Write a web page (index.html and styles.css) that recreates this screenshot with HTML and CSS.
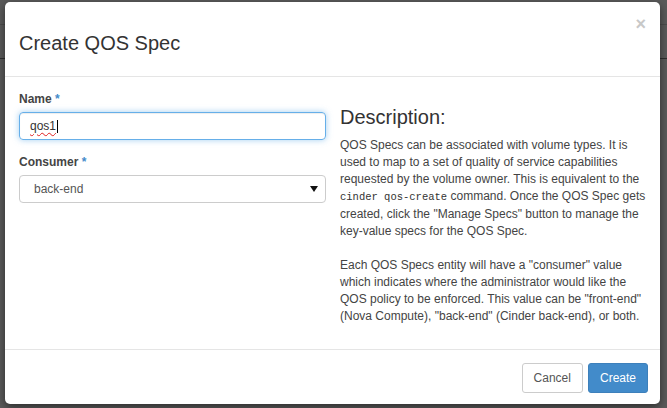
FILE: index.html
```html
<!DOCTYPE html>
<html lang="en">
<head>
<meta charset="utf-8">
<title>Create QOS Spec</title>
<link rel="stylesheet" href="styles.css">
</head>
<body>
<div class="backdrop">
  <div class="modal">
    <div class="modal-header">
      <h3 class="modal-title">Create QOS Spec</h3>
      <span class="close">&times;</span>
    </div>
    <div class="modal-body">
      <div class="form-col">
        <div class="form-group">
          <label class="label">Name <span class="req">*</span></label>
          <div class="control focused"><span class="misspelled">qos1</span><span class="caret"></span></div>
        </div>
        <div class="form-group">
          <label class="label">Consumer <span class="req">*</span></label>
          <div class="control select"><span>back-end</span>
            <svg class="arrow" width="8" height="6" viewBox="0 0 8 6"><path d="M0 0H8L4 6Z" fill="#111"/></svg>
          </div>
        </div>
      </div>
      <div class="help-col">
        <h3 class="help-title">Description:</h3>
        <p>QOS Specs can be associated with volume types. It is used to map to a set of quality of service capabilities requested by the volume owner. This is equivalent to the <code>cinder qos-create</code> command. Once the QOS Spec gets created, click the "Manage Specs" button to manage the key-value specs for the QOS Spec.</p>
        <p>Each QOS Specs entity will have a "consumer" value which indicates where the administrator would like the QOS policy to be enforced. This value can be "front-end" (Nova Compute), "back-end" (Cinder back-end), or both.</p>
      </div>
    </div>
    <div class="modal-footer">
      <button class="btn btn-default">Cancel</button>
      <button class="btn btn-primary">Create</button>
    </div>
  </div>
</div>
</body>
</html>
```
FILE: styles.css
```css
* { box-sizing: border-box; }
html, body { margin: 0; padding: 0; }
body {
  width: 667px;
  height: 408px;
  overflow: hidden;
  font-family: "Liberation Sans", Arial, sans-serif;
  font-size: 12px;
  line-height: 1.428571;
  color: #333;
  background:
    linear-gradient(to bottom, transparent 24px, #4c4c4c 24px, #4c4c4c 25px, transparent 25px),
    linear-gradient(to bottom, transparent 58px, #2e2e2e 58px, #2e2e2e 59px, transparent 59px),
    #5a5a5a;
}
.backdrop {
  padding: 2px 7px 0 5px;
}
.modal {
  width: 655px;
  height: 402px;
  background: #fff;
  border-radius: 5px;
  box-shadow: 0 3px 9px rgba(0,0,0,.5);
  display: flex;
  flex-direction: column;
}
.modal-header {
  display: flex;
  justify-content: space-between;
  align-items: flex-start;
  padding: 0 14px 0 14px;
  height: 75px;
  border-bottom: 1px solid #e5e5e5;
}
.modal-title {
  margin: 27px 0 0 0;
  font-size: 20px;
  line-height: 28px;
  font-weight: normal;
  color: #333;
}
.close {
  margin-top: 12px;
  font-size: 18px;
  line-height: 20px;
  font-weight: bold;
  color: #c8c8c8;
}
.modal-body {
  flex: 1;
  display: grid;
  grid-template-columns: 307px 307px;
  column-gap: 14px;
  padding: 14px 12px 0 14px;
}
.form-group { margin-bottom: 14px; }
.label {
  display: block;
  font-weight: bold;
  color: #444;
  margin-bottom: 4px;
}
.req { color: #428bca; }
.control {
  height: 28px;
  border: 1px solid #ccc;
  border-radius: 4px;
  padding: 0 10px;
  display: flex;
  align-items: center;
  color: #555;
  box-shadow: inset 0 1px 1px rgba(0,0,0,.075);
}
.control.focused {
  border-color: #66afe9;
  box-shadow: inset 0 1px 1px rgba(0,0,0,.075), 0 0 6px rgba(102,175,233,.6);
}
.misspelled {
  color: #333;
  text-decoration: underline wavy #e02020;
  text-decoration-thickness: 1px;
  text-underline-offset: 2px;
}
.caret {
  width: 1px;
  height: 13px;
  background: #000;
  margin-left: 1px;
}
.control.select {
  padding-left: 14px;
  padding-right: 7px;
  justify-content: space-between;
  box-shadow: none;
}
.arrow { display: block; }
.help-col { padding-top: 15px; }
.help-title {
  margin: 0 0 9px 0;
  font-size: 20px;
  line-height: 22px;
  font-weight: normal;
  color: #333;
}
.help-col p {
  margin: 0 0 17px 0;
  color: #444;
}
code {
  font-family: "Liberation Mono", monospace;
  font-size: 10.5px;
  color: #333;
}
.modal-footer {
  display: flex;
  justify-content: flex-end;
  gap: 5px;
  padding: 13px 12px 11px;
  border-top: 1px solid #e5e5e5;
}
.btn {
  font-family: "Liberation Sans", Arial, sans-serif;
  font-size: 12px;
  line-height: 16px;
  padding: 6px 11px;
  border-radius: 3px;
  border: 1px solid #ccc;
  cursor: pointer;
}
.btn-default { background: #fff; color: #555; }
.btn-primary { background: #428bca; border-color: #3d80bb; color: #fff; }
```
